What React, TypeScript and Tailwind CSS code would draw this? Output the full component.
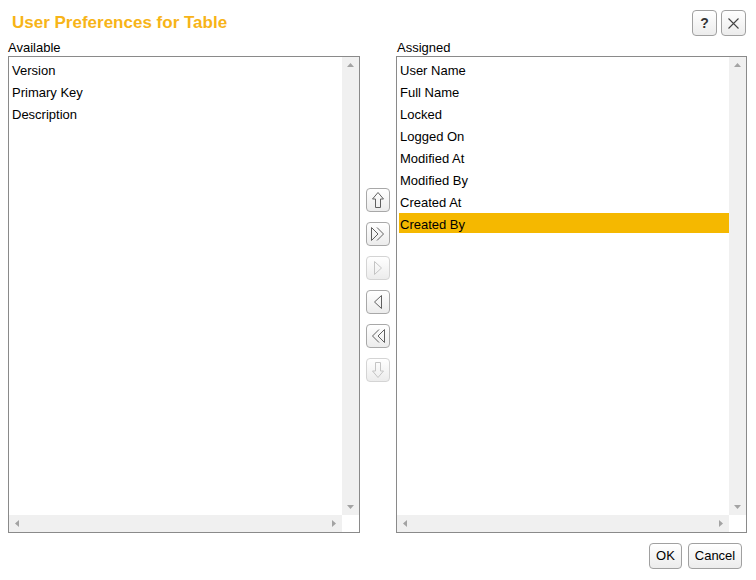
import React from "react";

const font = { fontFamily: '"Liberation Sans", Arial, sans-serif' };

function ScrollBox({ items, selected }: { items: string[]; selected?: number }) {
  return (
    <div className="relative flex-1 border border-[#8a8a8a] bg-white">
      <div className="absolute left-0 top-0 right-[17px] bottom-[17px] pt-[2px] pl-[2px] overflow-hidden">
        {items.map((it, i) => (
          <div
            key={it}
            className={`h-[20px] mb-[2px] pl-[1px] leading-[23px] text-[13px] text-black ${i === selected ? "bg-[#f5b800]" : ""}`}
          >
            {it}
          </div>
        ))}
      </div>
      {/* vertical scrollbar */}
      <div className="absolute top-0 right-0 w-[17px] bottom-[17px] bg-[#f0f0f0] flex flex-col justify-between items-center py-[6px]">
        <svg width="7" height="4" viewBox="0 0 7 4"><path d="M3.5 0 L7 4 L0 4Z" fill="#a3a3a3" /></svg>
        <svg width="7" height="4" viewBox="0 0 7 4"><path d="M0 0 L7 0 L3.5 4Z" fill="#a3a3a3" /></svg>
      </div>
      {/* horizontal scrollbar */}
      <div className="absolute left-0 bottom-0 right-[17px] h-[17px] bg-[#f0f0f0] flex justify-between items-center px-[6px]">
        <svg width="4" height="7" viewBox="0 0 4 7"><path d="M4 0 L4 7 L0 3.5Z" fill="#a3a3a3" /></svg>
        <svg width="4" height="7" viewBox="0 0 4 7"><path d="M0 0 L0 7 L4 3.5Z" fill="#a3a3a3" /></svg>
      </div>
    </div>
  );
}

function MoveBtn({ disabled, children }: { disabled?: boolean; children: React.ReactNode }) {
  return (
    <div
      className={`w-[24px] h-[24px] rounded-[4px] border flex items-center justify-center bg-gradient-to-b from-white to-[#ececec] ${disabled ? "border-[#d4d4d4]" : "border-[#a8a8a8]"}`}
    >
      {children}
    </div>
  );
}

export default function App() {
  const on = "#606060";
  const off = "#c4c4c4";
  return (
    <div className="w-[756px] h-[580px] bg-white flex flex-col" style={font}>
      {/* header */}
      <div className="h-[40px] flex items-start justify-between pl-[12px] pr-[10px]">
        <div className="pt-[13px] text-[17px] font-bold text-[#f7b418] leading-[20px]">User Preferences for Table</div>
        <div className="flex gap-[4px] pt-[10px]">
          <div className="w-[25px] h-[26px] rounded-[4px] border border-[#a0a0a0] bg-gradient-to-b from-white to-[#ececec] flex items-center justify-center text-[14px] font-bold text-[#333]">?</div>
          <div className="w-[25px] h-[26px] rounded-[4px] border border-[#a0a0a0] bg-gradient-to-b from-white to-[#ececec] flex items-center justify-center">
            <svg width="11" height="11" viewBox="0 0 11 11"><path d="M0.5 0.5 L10.5 10.5 M10.5 0.5 L0.5 10.5" stroke="#444" strokeWidth="1.1" /></svg>
          </div>
        </div>
      </div>
      {/* lists */}
      <div className="flex pl-[8px] pr-[9px]">
        <div className="w-[352px] flex flex-col">
          <div className="h-[16px] text-[13px] leading-[16px] text-black">Available</div>
          <div className="h-[477px] flex">
            <ScrollBox items={["Version", "Primary Key", "Description"]} />
          </div>
        </div>
        <div className="w-[36px] flex flex-col items-center pt-[148px] gap-[10px]">
          <MoveBtn>
            <svg width="12" height="16" viewBox="0 0 12 16"><path d="M6 0.5 L11.5 7 L8.5 7 L8.5 15.5 L3.5 15.5 L3.5 7 L0.5 7 Z" fill="none" stroke={on} strokeWidth="1" /></svg>
          </MoveBtn>
          <MoveBtn>
            <svg width="14" height="14" viewBox="0 0 14 14"><path d="M0.5 0.5 L7 7 L0.5 13.5 Z M6 0.5 L12.5 7 L6 13.5" fill="none" stroke={on} strokeWidth="1" /></svg>
          </MoveBtn>
          <MoveBtn disabled>
            <svg width="8" height="14" viewBox="0 0 8 14"><path d="M0.5 0.5 L7.5 7 L0.5 13.5 Z" fill="none" stroke={off} strokeWidth="1" /></svg>
          </MoveBtn>
          <MoveBtn>
            <svg width="8" height="14" viewBox="0 0 8 14"><path d="M7.5 0.5 L0.5 7 L7.5 13.5 Z" fill="none" stroke={on} strokeWidth="1" /></svg>
          </MoveBtn>
          <MoveBtn>
            <svg width="14" height="14" viewBox="0 0 14 14"><path d="M13.5 0.5 L7 7 L13.5 13.5 Z M8 0.5 L1.5 7 L8 13.5" fill="none" stroke={on} strokeWidth="1" /></svg>
          </MoveBtn>
          <MoveBtn disabled>
            <svg width="12" height="16" viewBox="0 0 12 16"><path d="M6 15.5 L11.5 9 L8.5 9 L8.5 0.5 L3.5 0.5 L3.5 9 L0.5 9 Z" fill="none" stroke={off} strokeWidth="1" /></svg>
          </MoveBtn>
        </div>
        <div className="w-[351px] flex flex-col">
          <div className="h-[16px] text-[13px] leading-[16px] text-black pl-[1px]">Assigned</div>
          <div className="h-[477px] flex">
            <ScrollBox
              items={["User Name", "Full Name", "Locked", "Logged On", "Modified At", "Modified By", "Created At", "Created By"]}
              selected={7}
            />
          </div>
        </div>
      </div>
      {/* footer */}
      <div className="flex justify-end gap-[6px] pr-[14px] pt-[10px]">
        <div className="w-[33px] h-[26px] rounded-[4px] border border-[#a0a0a0] bg-gradient-to-b from-white to-[#ececec] flex items-center justify-center text-[13px] text-black">OK</div>
        <div className="w-[54px] h-[26px] rounded-[4px] border border-[#a0a0a0] bg-gradient-to-b from-white to-[#ececec] flex items-center justify-center text-[13px] text-black">Cancel</div>
      </div>
    </div>
  );
}
